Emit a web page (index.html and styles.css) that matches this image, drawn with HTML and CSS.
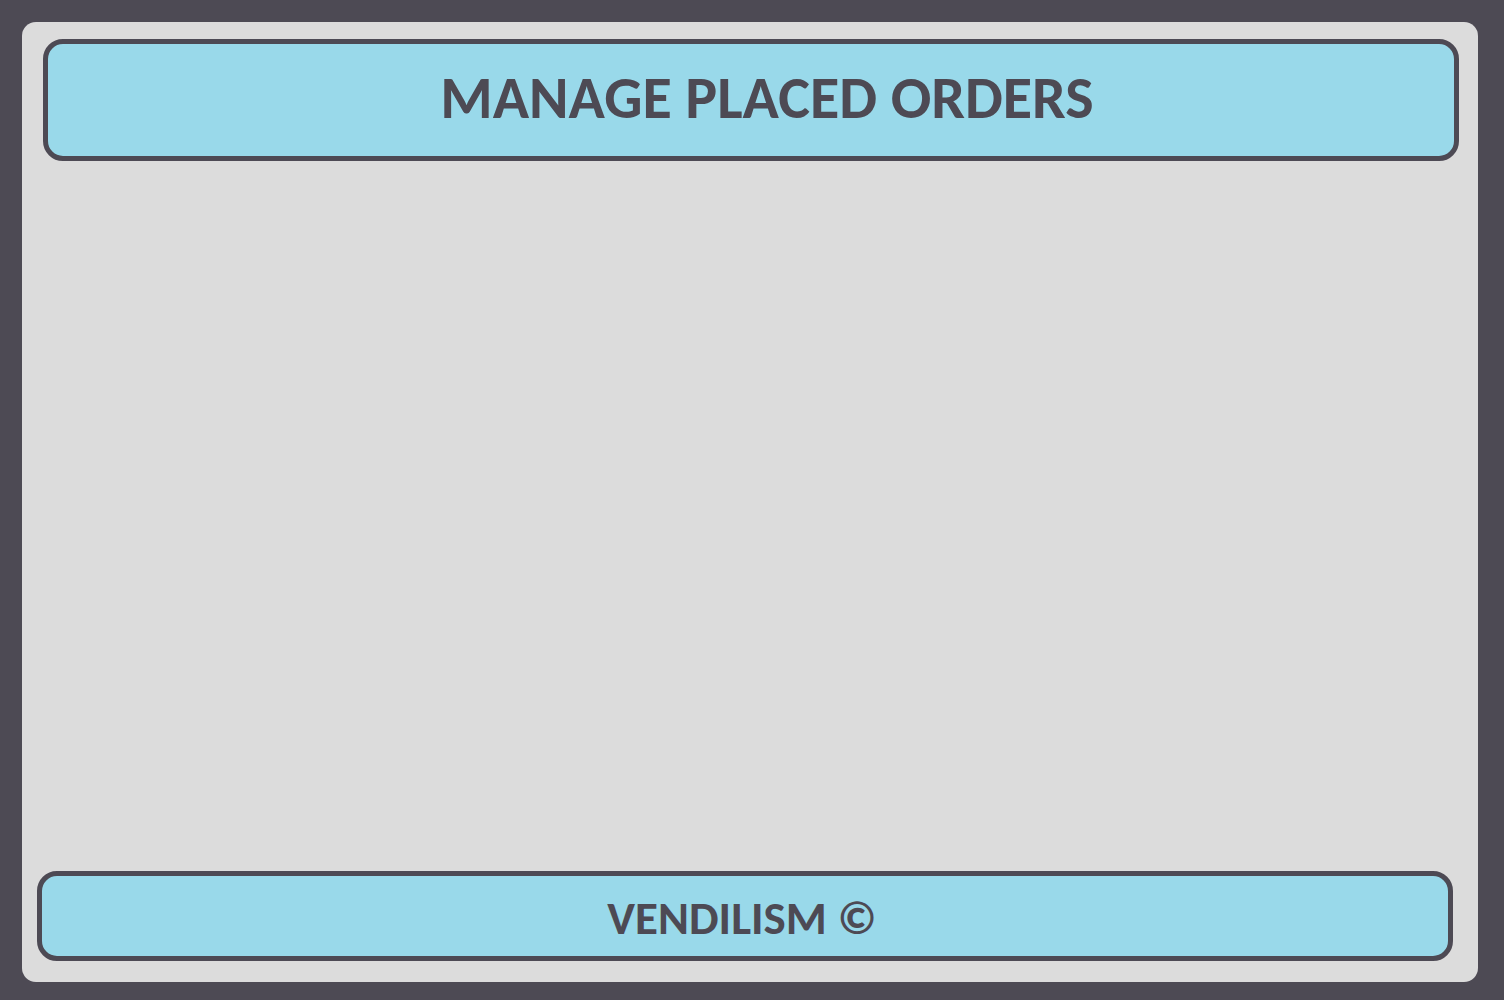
FILE: index.html
```
<!DOCTYPE html>
<html lang="en">
<head>
<meta charset="utf-8">
<title>Manage Placed Orders</title>
<link rel="stylesheet" href="styles.css">
</head>
<body>
<div class="panel">
<header class="banner banner-top"><h1 class="title">MANAGE PLACED ORDERS</h1></header>
<main class="content"></main>
<footer class="banner banner-bottom"><p class="brand">VENDILISM ©</p></footer>
</div>
</body>
</html>
```
FILE: styles.css
```
* { box-sizing: border-box; }
body {
  margin: 0;
  min-height: 100vh;
  display: flex;
  padding: 22px 26px 18px 22px;
  background: #4d4a54;
  color: #4d4a54;
  font-family: Carlito, Calibri, Lato, sans-serif;
}
.panel {
  flex: 1;
  display: flex;
  flex-direction: column;
  padding: 17px 19px 21px 15px;
  border-radius: 14px;
  background: #dcdcdc;
}
.banner {
  display: flex;
  align-items: center;
  justify-content: center;
  border: 5px solid #4d4a54;
  border-radius: 20px;
  background: #99d9ea;
}
.banner-top {
  min-height: 122px;
  margin-left: 6px;
  padding: 0 0 4px 32px;
}
.banner-bottom {
  min-height: 90px;
  margin-right: 6px;
  padding: 4px 6px 0 0;
}
.content { flex: 1; }
.title, .brand {
  margin: 0;
  font-weight: 700;
}
.title { font-size: 60px; line-height: 64px; }
.brand { font-size: 47px; line-height: 52px; }
```
